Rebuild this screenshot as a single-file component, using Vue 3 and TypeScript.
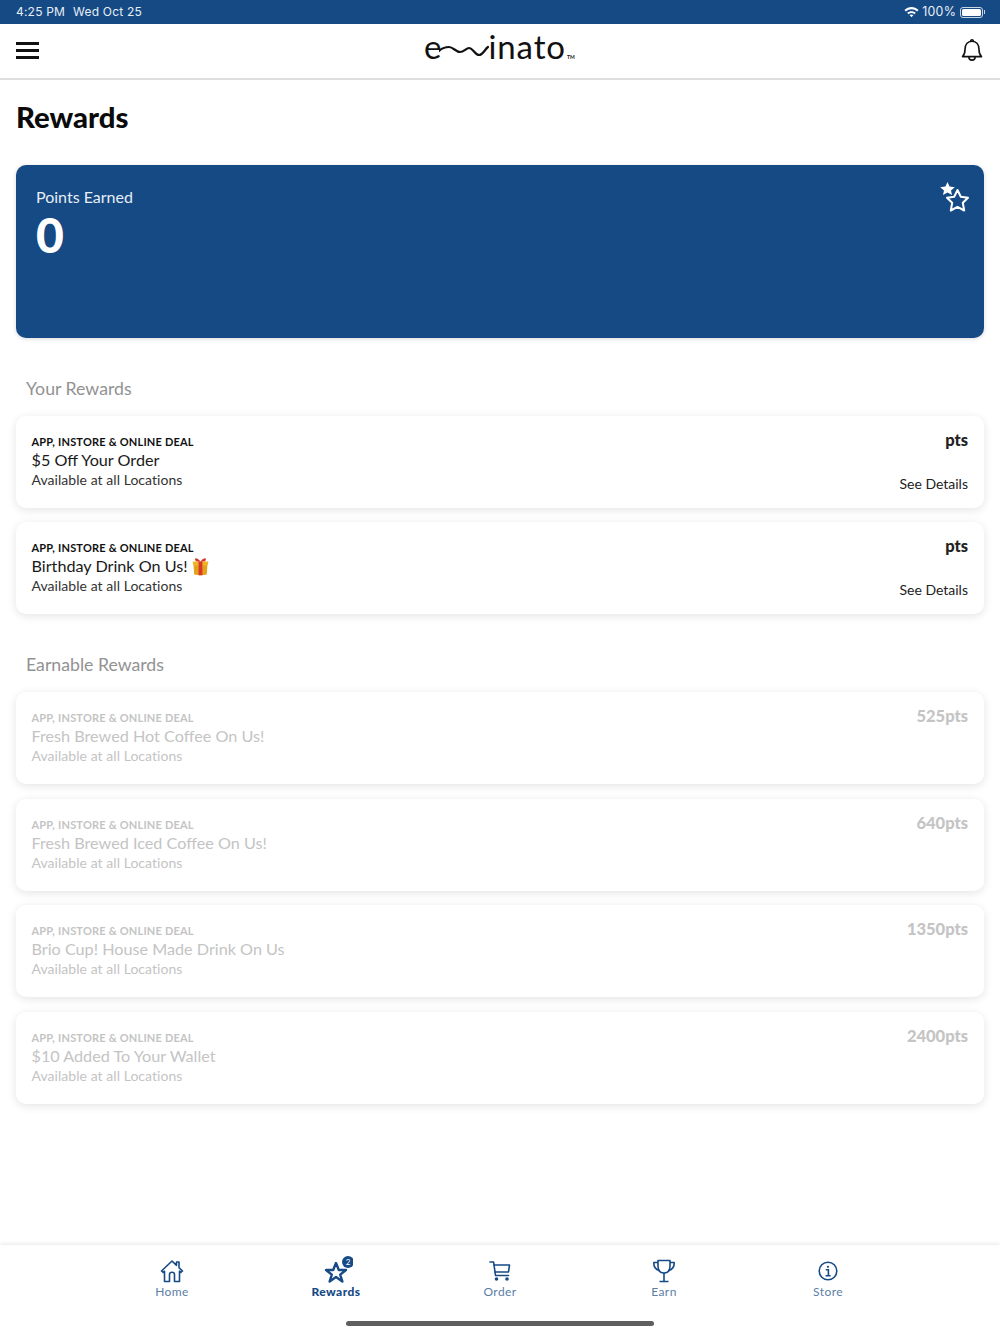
<script setup lang="ts">
interface Reward {
  title: string;
  points: string;
  gift?: boolean;
}

const yourRewards: Reward[] = [
  { title: '$5 Off Your Order', points: 'pts' },
  { title: 'Birthday Drink On Us!', points: 'pts', gift: true },
];

const earnableRewards: Reward[] = [
  { title: 'Fresh Brewed Hot Coffee On Us!', points: '525pts' },
  { title: 'Fresh Brewed Iced Coffee On Us!', points: '640pts' },
  { title: 'Brio Cup! House Made Drink On Us', points: '1350pts' },
  { title: '$10 Added To Your Wallet', points: '2400pts' },
];

const tabs = ['Home', 'Rewards', 'Order', 'Earn', 'Store'];
</script>

<template>
  <div class="page">
    <div class="status">
      <div class="status-left"><span>4:25 PM</span><span>Wed Oct 25</span></div>
      <div class="status-right">
        <svg width="15" height="12" viewBox="0 0 14 11">
          <path d="M0.4 3.6C4.2 0 9.8 0 13.6 3.6L12.2 5.1C9.2 2.3 4.8 2.3 1.8 5.1Z" fill="#fff" />
          <path d="M3 6.2C5 4.3 9 4.3 11 6.2L9.7 7.5C8.3 6.2 5.7 6.2 4.3 7.5Z" fill="#fff" />
          <path d="M5.2 8.4C6.2 7.6 7.8 7.6 8.8 8.4L7 10.4Z" fill="#fff" />
        </svg>
        <span>100%</span>
        <div class="battery"><div class="battery-fill"></div></div>
        <div class="battery-tip"></div>
      </div>
    </div>

    <header class="topbar">
      <div class="burger"><i></i><i></i><i></i></div>
      <div class="logo">
        <span>e</span>
        <svg class="squiggle" width="50" height="24" viewBox="0 0 50 24">
          <path d="M0 12C3 9 6 8 10 8C14 8 17 13 21 13C25 13 27 9 30 9C34 9 36 16 40 16C44 16 46 10 49 8" fill="none" stroke="#111" stroke-width="2.2" stroke-linecap="round" />
        </svg>
        <span class="logo-rest">inato</span>
        <span class="tm">TM</span>
      </div>
      <svg class="bell" width="22" height="24" viewBox="0 0 22 24">
        <path d="M1.5 18.6C3.6 16.6 4 14.8 4 11.5C4 6.6 6.6 3.2 11 3.2C15.4 3.2 18 6.6 18 11.5C18 14.8 18.4 16.6 20.5 18.6Z" fill="none" stroke="#111" stroke-width="1.6" stroke-linejoin="round" />
        <path d="M9.6 3C9.8 1.3 12.2 1.3 12.4 3M7.8 19C8 23.2 14 23.2 14.2 19" fill="none" stroke="#111" stroke-width="1.6" />
      </svg>
    </header>

    <main class="content">
      <h1>Rewards</h1>

      <section class="hero">
        <div class="hero-label">Points Earned</div>
        <div class="hero-value">0</div>
        <svg class="hero-stars" width="32" height="34" viewBox="0 0 32 34">
          <path d="M7.5 2L9.6 6.6L14.8 7.2L11 10.6L12 15L7.5 12.6L3 15L4 10.6L0.2 7.2L5.4 6.6Z" fill="#fff" />
          <path d="M17.5 10L20.8 16.8L28 17.7L22.8 22.8L24.2 30.5L17.5 26.8L10.8 30.5L12.2 22.8L7 17.7L14.2 16.8Z" fill="none" stroke="#fff" stroke-width="2" stroke-linejoin="round" />
        </svg>
      </section>

      <h2>Your Rewards</h2>
      <div class="list">
        <article v-for="r in yourRewards" :key="r.title" class="card">
          <div class="card-main">
            <div class="deal">APP, INSTORE &amp; ONLINE DEAL</div>
            <div class="title">
              {{ r.title }}
              <svg v-if="r.gift" class="gift" width="19" height="19" viewBox="0 0 19 19">
                <path d="M2.5 6.5H16.5L15.8 17.5C12 18.6 7 18.6 3.2 17.5Z" fill="#e3a21a" />
                <path d="M1.6 4.4L17.4 4.4L16.8 8C12 9 7 9 2.2 8Z" fill="#efb52a" />
                <path d="M7.6 4.4H11.4V18.2C10 18.4 9 18.4 7.6 18.2Z" fill="#d8372c" />
                <path d="M9.5 4.6C6 0 3 1 4.4 3.4C5.2 4.6 7.4 4.6 9.5 4.6C12 4.6 13.8 4.6 14.6 3.4C16 1 13 0 9.5 4.6Z" fill="#d8372c" />
              </svg>
            </div>
            <div class="where">Available at all Locations</div>
          </div>
          <div class="card-side">
            <div class="points">{{ r.points }}</div>
            <div class="details">See Details</div>
          </div>
        </article>
      </div>

      <h2 class="second">Earnable Rewards</h2>
      <div class="list">
        <article v-for="r in earnableRewards" :key="r.title" class="card locked">
          <div class="card-main">
            <div class="deal">APP, INSTORE &amp; ONLINE DEAL</div>
            <div class="title">{{ r.title }}</div>
            <div class="where">Available at all Locations</div>
          </div>
          <div class="card-side">
            <div class="points">{{ r.points }}</div>
          </div>
        </article>
      </div>
    </main>

    <nav class="tabbar">
      <div v-for="t in tabs" :key="t" class="tab" :class="{ active: t === 'Rewards' }">
        <div class="tab-icon">
          <svg v-if="t === 'Home'" width="24" height="24" viewBox="0 0 24 24" fill="none" stroke="#154a85" stroke-width="1.6" stroke-linejoin="round">
            <path d="M1.5 12L12 2L16.5 6.3V3H19V8.7L22.5 12L20.8 13.4L19.5 12.2V22.5H14.5V15.5C14.5 12.5 9.5 12.5 9.5 15.5V22.5H4.5V12.2L3.2 13.4Z" />
          </svg>
          <svg v-else-if="t === 'Rewards'" width="34" height="30" viewBox="0 0 34 30">
            <path d="M17 7L19.8 14H27L21.2 18.6L23.4 25.5L17 21L10.6 25.5L12.8 18.6L7 14H14.2Z" fill="none" stroke="#154a85" stroke-width="2.4" stroke-linejoin="round" />
            <circle cx="29" cy="6" r="6" fill="#154a85" />
            <text x="29" y="9" text-anchor="middle" class="badge">2</text>
          </svg>
          <svg v-else-if="t === 'Order'" width="22" height="22" viewBox="0 0 22 22" fill="none" stroke="#154a85" stroke-width="1.6" stroke-linecap="round" stroke-linejoin="round">
            <path d="M1 2H4.6L6.5 15.5H19.5" />
            <path d="M5 5H20.5L19.5 12H6" />
            <circle cx="7.5" cy="19" r="1" fill="#154a85" />
            <circle cx="18" cy="19" r="1" fill="#154a85" />
          </svg>
          <svg v-else-if="t === 'Earn'" width="24" height="24" viewBox="0 0 24 24" fill="none" stroke="#154a85" stroke-width="1.6" stroke-linejoin="round">
            <path d="M6 1.5H18V7C18 11.5 15.5 14 12 14C8.5 14 6 11.5 6 7Z" />
            <path d="M6 3.5H1.8C1.6 8 3.4 10.5 7.4 11.6M18 3.5H22.2C22.4 8 20.6 10.5 16.6 11.6" />
            <path d="M12 14V22M7.5 22.5H16.5" />
          </svg>
          <svg v-else width="22" height="22" viewBox="0 0 22 22" fill="none" stroke="#154a85" stroke-width="1.6">
            <circle cx="11" cy="11" r="8.8" />
            <circle cx="11" cy="6.8" r="1.1" fill="#154a85" stroke="none" />
            <path d="M8.8 9.8H11.4V15.8M8.6 15.8H13.6" />
          </svg>
        </div>
        <div class="tab-label">{{ t }}</div>
      </div>
    </nav>
    <div class="home-bar"></div>
  </div>
</template>

<style scoped>
.page {
  position: relative;
  width: 1000px;
  height: 1334px;
  overflow: hidden;
  background: #fff;
  display: flex;
  flex-direction: column;
  font-family: Lato, "Noto Sans", sans-serif;
  color: #111;
}
.status {
  height: 24px;
  flex: none;
  background: #154a85;
  color: #e8eef5;
  font-family: Inter, Roboto, sans-serif;
  font-size: 12px;
  letter-spacing: 0.2px;
  line-height: 24px;
  display: flex;
  align-items: flex-start;
  justify-content: space-between;
  padding: 0 15px 0 16px;
}
.status-left {
  display: flex;
  gap: 8px;
}
.status-right {
  display: flex;
  align-items: center;
  gap: 3px;
  height: 24px;
  font-size: 12.4px;
}
.battery {
  width: 23px;
  height: 11px;
  border: 1px solid #c9d6e4;
  border-radius: 3px;
  padding: 1px;
  box-sizing: border-box;
  margin-left: 1px;
}
.battery-fill {
  height: 100%;
  background: #fff;
  border-radius: 1.5px;
}
.battery-tip {
  width: 1px;
  height: 4px;
  background: #c9d6e4;
  margin-left: -2px;
}
.topbar {
  height: 56px;
  flex: none;
  border-bottom: 2px solid #dedede;
  box-sizing: border-box;
  display: flex;
  align-items: center;
  justify-content: space-between;
  padding: 0 17px 2px 16px;
  position: relative;
}
.burger {
  width: 23px;
  display: flex;
  flex-direction: column;
  gap: 4px;
}
.burger i {
  height: 3px;
  background: #111;
  display: block;
}
.logo {
  position: absolute;
  left: 424px;
  top: 0;
  display: flex;
  align-items: baseline;
  font-size: 33px;
  font-weight: 400;
  line-height: 44px;
  color: #111;
}
.squiggle {
  margin: 0 -1px 0 -2px;
  align-self: center;
  position: relative;
  top: -1px;
}
.logo-rest {
  letter-spacing: 0.9px;
}
.tm {
  font-size: 5px;
  font-weight: 700;
  margin-left: 1px;
}
.content {
  flex: 1;
  padding: 0 16px;
}
h1 {
  margin: 19px 0 0;
  font-size: 29.3px;
  line-height: 36px;
  font-weight: 900;
  color: #0b0b0b;
}
.hero {
  position: relative;
  margin-top: 30px;
  height: 173px;
  box-sizing: border-box;
  padding: 22px 20px;
  background: #154a85;
  border-radius: 10px;
  color: #fff;
  box-shadow: 0 1px 4px rgba(0, 0, 0, 0.15);
}
.hero-label {
  font-size: 16px;
  line-height: 20px;
  color: #e8eef5;
}
.hero-value {
  font-size: 48px;
  line-height: 54px;
  font-weight: 900;
  margin-top: 1px;
}
.hero-stars {
  position: absolute;
  top: 15px;
  right: 12px;
}
h2 {
  margin: 39px 0 0 10px;
  font-size: 17.7px;
  line-height: 24px;
  font-weight: 400;
  color: #929292;
}
h2.second {
  margin-top: 39px;
}
.list {
  margin-top: 15px;
  display: flex;
  flex-direction: column;
  gap: 14.4px;
}
.card {
  height: 92px;
  box-sizing: border-box;
  padding: 19px 16px 0 15.5px;
  border-radius: 10px;
  background: #fff;
  box-shadow: 0 2px 10px rgba(0, 0, 0, 0.11);
  display: flex;
  justify-content: space-between;
}
.deal {
  font-size: 11px;
  line-height: 14px;
  font-weight: 700;
  letter-spacing: 0.2px;
  color: #111;
}
.title {
  font-size: 16.2px;
  line-height: 22px;
  display: flex;
  align-items: center;
  gap: 3px;
  color: #1a1a1a;
}
.where {
  font-size: 14px;
  line-height: 18px;
  color: #333;
  letter-spacing: 0.05px;
}
.card-side {
  display: flex;
  flex-direction: column;
  align-items: flex-end;
}
.points {
  font-size: 16.5px;
  line-height: 20px;
  font-weight: 900;
  margin-top: -5px;
  color: #222;
}
.details {
  font-size: 14px;
  line-height: 18px;
  margin-top: 25px;
  color: #222;
}
.locked .deal,
.locked .title,
.locked .where,
.locked .points {
  color: #c4c4c4;
}
.tabbar {
  height: 89px;
  flex: none;
  box-sizing: border-box;
  padding: 13px 90px 0;
  display: grid;
  grid-template-columns: repeat(5, 164px);
  background: #fff;
  box-shadow: 0 -1px 4px rgba(0, 0, 0, 0.1);
}
.tab {
  display: flex;
  flex-direction: column;
  align-items: center;
}
.tab-icon {
  height: 26px;
  display: flex;
  align-items: center;
  justify-content: center;
}
.tab-label {
  font-size: 12px;
  line-height: 16px;
  letter-spacing: 0.4px;
  color: #5b7ea6;
}
.active .tab-label {
  color: #154a85;
  font-weight: 900;
}
.badge {
  font-size: 8px;
  fill: #fff;
  font-family: Lato, sans-serif;
}
.home-bar {
  position: absolute;
  left: 346px;
  top: 1321px;
  width: 308px;
  height: 5px;
  border-radius: 3px;
  background: #5f5f5f;
}
</style>
